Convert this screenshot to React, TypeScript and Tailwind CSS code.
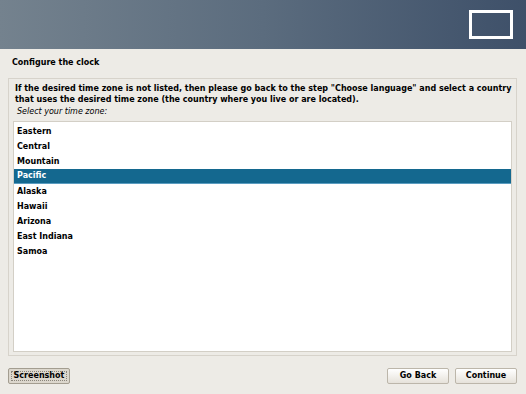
const zones = ['Eastern', 'Central', 'Mountain', 'Pacific', 'Alaska', 'Hawaii', 'Arizona', 'East Indiana', 'Samoa'];

export default function App() {
  const selected = 'Pacific';
  return (
    <div className="flex h-[394px] w-[526px] flex-col bg-[#edebe6] font-['DejaVu_Sans',sans-serif] text-[8px] text-black">
      {/* banner */}
      <div className="flex h-[49px] shrink-0 justify-end bg-gradient-to-r from-[#74828e] via-[#5b6c7e] to-[#3e5069] pr-[13px] pt-[10px]">
        <div className="h-[29px] w-[44px] border-[3px] border-white" />
      </div>

      <div className="flex h-[29px] shrink-0 items-start pl-[12px] pt-[9px] font-bold leading-[10px]">
        Configure the clock
      </div>

      <div className="mx-[8px] mr-[9px] flex h-[278px] shrink-0 flex-col border border-[#d7d3cb] px-[4px] pb-[3px]">
        <div className="pl-[2px] pt-[5px] font-bold leading-[10.5px]">
          If the desired time zone is not listed, then please go back to the step "Choose language" and select a country
          <br />
          that uses the desired time zone (the country where you live or are located).
        </div>
        <div className="pl-[4px] pt-[1px] italic leading-[11px]">Select your time zone:</div>
        <div className="mt-[4px] flex-1 border border-[#d3cfc6] bg-white pt-[2px]">
          {zones.map((z) => (
            <div
              key={z}
              className={`flex h-[15px] items-center pl-[3px] font-bold ${
                z === selected ? 'border-b border-[#5a9cc0] bg-[#14688f] text-white' : ''
              }`}
            >
              {z}
            </div>
          ))}
        </div>
      </div>

      <div className="flex flex-1 items-start justify-between pl-[8px] pr-[9px] pt-[12px]">
        <button className="relative flex h-[16px] w-[62px] items-center justify-center rounded-[2px] border border-[#a39d90] bg-[#dcd7cd] px-0 font-bold">
          <span className="pointer-events-none absolute inset-[2px] border border-dotted border-[#8a857b]" />
          <span className="relative whitespace-nowrap leading-[10px]">Screenshot</span>
        </button>
        <div className="flex gap-[6px]">
          <button className="flex h-[16px] w-[62px] items-center justify-center rounded-[2px] border border-[#bcb6aa] bg-gradient-to-b from-white to-[#e6e2da] font-bold">
            Go Back
          </button>
          <button className="flex h-[16px] w-[62px] items-center justify-center rounded-[2px] border border-[#bcb6aa] bg-gradient-to-b from-white to-[#e6e2da] font-bold">
            Continue
          </button>
        </div>
      </div>
    </div>
  );
}
